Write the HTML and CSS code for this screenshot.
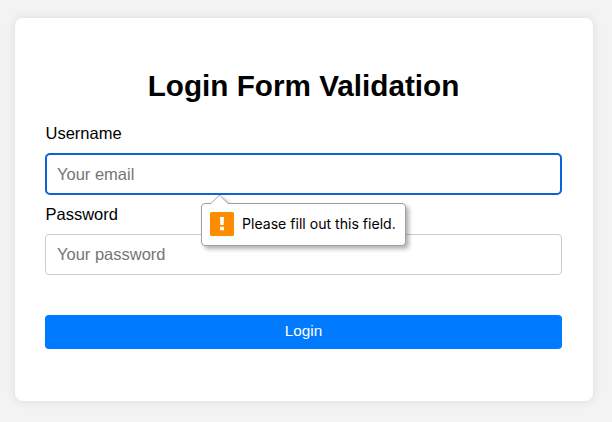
FILE: index.html
```html
<!DOCTYPE html>
<html lang="en">
<head>
<meta charset="utf-8">
<title>Login Form Validation</title>
<link rel="stylesheet" href="styles.css">
</head>
<body>
<form class="card" novalidate>
  <h1 class="title">Login Form Validation</h1>
  <label class="label" for="username">Username</label>
  <div class="field">
    <input class="input input-active" id="username" type="email" placeholder="Your email">
    <div class="tooltip" role="alert">
      <svg class="bubble" width="206" height="53" viewBox="0 0 206 53" aria-hidden="true">
        <path d="M4 9.500H10L18.500 1L27 9.500H201Q204.500 9.500 204.500 13V48Q204.500 51.500 201 51.500H4Q.5 51.500 .5 48V13Q.5 9.500 4 9.500Z"/>
      </svg>
      <svg class="warning" width="24" height="24" viewBox="0 0 24 24" aria-hidden="true">
        <rect width="24" height="24" rx="1.500" fill="#ff8b00"/>
        <path d="M10 5h4l-.4 8h-3.200zM10 14.700h4v3.500h-4z" fill="#fff"/>
      </svg>
      <span class="message">Please fill out this field.</span>
    </div>
  </div>
  <label class="label label-second" for="password">Password</label>
  <input class="input input-password" id="password" type="password" placeholder="Your password">
  <button class="button" type="submit">Login</button>
</form>
</body>
</html>
```
FILE: styles.css
```css
* { box-sizing: border-box; }
body {
  margin: 0;
  padding: 18px 19px 21px 15px;
  height: 422px;
  overflow: hidden;
  background: #f3f3f3;
  font-family: "Liberation Sans", Arial, sans-serif;
}
.card {
  height: 383px;
  padding: 50px 31px 0 30px;
  background: #fff;
  border-radius: 8px;
  box-shadow: 0 0 10px rgba(0, 0, 0, .1);
}
.title {
  margin: 0 0 20px;
  font-size: 29.7px;
  line-height: 36px;
  text-align: center;
}
.label {
  display: block;
  height: 29px;
  padding-left: .5px;
  font-size: 16.5px;
  line-height: 19px;
}
.label-second { margin-top: 10px; }
.field { position: relative; }
.input {
  display: block;
  width: 517px;
  height: 42px;
  padding: 0 11px;
  border: 1px solid #ccc;
  border-radius: 4px;
  font: 16.5px "Liberation Sans", Arial, sans-serif;
}
.input::placeholder { color: #757575; opacity: 1; }
.input-active { border: 2px solid #0b63d6; border-radius: 5px; padding: 0 10px; }
.input-password { height: 41px; }
.button {
  display: block;
  width: 517px;
  height: 34px;
  margin-top: 40px;
  padding: 0 0 2px;
  border: 0;
  border-radius: 4px;
  background: #007bff;
  color: #fff;
  font: 15.3px/32px "Liberation Sans", Arial, sans-serif;
}
.tooltip {
  position: absolute;
  left: 156px;
  top: 41px;
  width: 205px;
  height: 53px;
  display: flex;
  align-items: center;
  gap: 8px;
  padding: 7px 9px 0;
}
.bubble {
  position: absolute;
  left: 0;
  top: 0;
  overflow: visible;
  fill: #fff;
  stroke: #a0a0a0;
  filter: drop-shadow(3px 3px 2px rgba(0, 0, 0, .3));
}
.warning, .message { position: relative; flex: none; }
.message { font: 14.1px/20px Inter, sans-serif; white-space: nowrap; }
```
